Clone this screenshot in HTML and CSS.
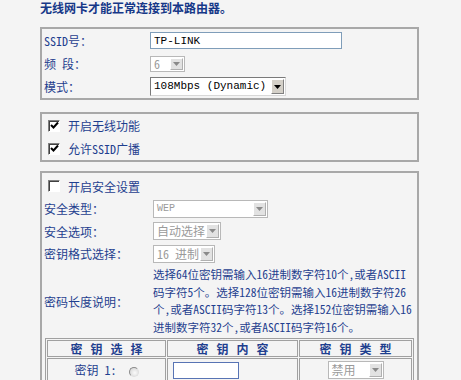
FILE: index.html
```html
<!DOCTYPE html>
<html lang="zh-CN">
<head>
    <meta charset="UTF-8">
    <title>无线网络基本设置</title>
    <link rel="stylesheet" href="styles.css">
</head>
<body>
    <div class="page">
        <div class="title">无线网卡才能正常连接到本路由器。</div>

        <div class="panel">
            <div class="row">
                <span class="label">SSID号：</span>
                <input class="text ssid" type="text" value="TP-LINK">
            </div>
            <div class="row">
                <span class="label">频 段：</span>
                <div class="sel off chan">
                    <span class="val">6</span>
                    <span class="arr"><svg width="7" height="4" viewBox="0 0 7 4"><path d="M0 0h7L3.5 4z"/></svg></span>
                </div>
            </div>
            <div class="row">
                <span class="label">模式：</span>
                <div class="sel mode">
                    <span class="val mono">108Mbps (Dynamic)</span>
                    <span class="arr"><svg width="7" height="4" viewBox="0 0 7 4"><path d="M0 0h7L3.5 4z"/></svg></span>
                </div>
            </div>
        </div>

        <div class="panel checks">
            <div class="row">
                <span class="box"><svg width="9" height="9" viewBox="0 0 9 9"><path d="M1 4l2.5 2.5L8 1.5" /></svg></span>
                <span>开启无线功能</span>
            </div>
            <div class="row">
                <span class="box"><svg width="9" height="9" viewBox="0 0 9 9"><path d="M1 4l2.5 2.5L8 1.5" /></svg></span>
                <span>允许SSID广播</span>
            </div>
        </div>

        <div class="panel sec">
            <div class="row">
                <span class="box"></span>
                <span>开启安全设置</span>
            </div>
            <div class="row">
                <span class="label">安全类型：</span>
                <div class="sel off wep">
                    <span class="val mono small">WEP</span>
                    <span class="arr"><svg width="7" height="4" viewBox="0 0 7 4"><path d="M0 0h7L3.5 4z"/></svg></span>
                </div>
            </div>
            <div class="row">
                <span class="label">安全选项：</span>
                <div class="sel off auto">
                    <span class="val">自动选择</span>
                    <span class="arr"><svg width="7" height="4" viewBox="0 0 7 4"><path d="M0 0h7L3.5 4z"/></svg></span>
                </div>
            </div>
            <div class="row">
                <span class="label">密钥格式选择：</span>
                <div class="sel off hex">
                    <span class="val">16 进制</span>
                    <span class="arr"><svg width="7" height="4" viewBox="0 0 7 4"><path d="M0 0h7L3.5 4z"/></svg></span>
                </div>
            </div>
            <div class="row tall">
                <span class="label">密码长度说明：</span>
                <div class="desc">
                    选择64位密钥需输入16进制数字符10个，或者ASCII<br>
                    码字符5个。选择128位密钥需输入16进制数字符26<br>
                    个，或者ASCII码字符13个。选择152位密钥需输入16<br>
                    进制数字符32个，或者ASCII码字符16个。
                </div>
            </div>

            <table class="keys">
                <colgroup>
                    <col class="c1">
                    <col class="c2">
                    <col class="c3">
                </colgroup>
                <tr>
                    <th>密 钥 选 择</th>
                    <th>密 钥 内 容</th>
                    <th>密 钥 类 型</th>
                </tr>
                <tr>
                    <td class="center">密钥 1: <span class="radio"></span></td>
                    <td><input class="text key" type="text" value=""></td>
                    <td class="center">
                        <div class="sel off kind">
                            <span class="val">禁用</span>
                            <span class="arr"><svg width="7" height="4" viewBox="0 0 7 4"><path d="M0 0h7L3.5 4z"/></svg></span>
                        </div>
                    </td>
                </tr>
            </table>
        </div>
    </div>
</body>
</html>
```

FILE: styles.css
```css
body {
    margin: 0;
    background-color: #f4f4f4;
    font-family: "Noto Sans CJK SC", sans-serif;
    font-size: 12px;
    font-feature-settings: "hwid";
    color: #1f3f8f;
    overflow: hidden;
}

.page {
    width: 379px;
    padding-left: 40px;
}

.title {
    font-weight: bold;
    line-height: 15px;
    color: #163888;
}

.panel {
    border: 2px solid #a8a8a8;
    margin-top: 12px;
    padding-left: 2px;
}

.checks {
    margin-top: 12px;
}

.sec {
    margin-top: 9px;
    padding-top: 2px;
}

.row {
    display: flex;
    align-items: center;
    height: 23px;
}

.sec .row {
    height: 22.5px;
}

.sec .row.tall {
    height: auto;
    padding-top: 1px;
}

.label {
    width: 106px;
    flex-shrink: 0;
}

.sec .label {
    width: 109px;
}

.text {
    box-sizing: border-box;
    height: 17px;
    margin: 0;
    padding: 0 3px;
    border: 1px solid #7f9db9;
    background-color: #fff;
    font-family: "Liberation Mono", monospace;
    font-size: 11px;
    color: #000;
}

.ssid {
    width: 192px;
}

.key {
    width: 66px;
    margin-left: 5px;
    border-color: #5874b4;
}

/* fake select boxes */
.sel {
    display: inline-flex;
    box-sizing: border-box;
    height: 18px;
    border: 1px solid #7a7a7a;
    border-right-color: #d8d8d8;
    border-bottom-color: #d8d8d8;
    background-color: #fff;
    color: #000;
    text-align: left;
}

.sel .val {
    flex: 1;
    padding-left: 3px;
    line-height: 16px;
    white-space: nowrap;
}

.sel .arr {
    width: 13px;
    margin: 1px;
    box-sizing: border-box;
    border: 1px solid;
    border-color: #fff #808080 #808080 #fff;
    background-color: #d4d0c8;
    display: flex;
    align-items: center;
    justify-content: center;
}

.sel .arr path {
    fill: #000;
}

.sel.off {
    border-color: #b8b8b8;
    color: #9a9a9a;
}

.sel.off .arr {
    background-color: #e2e2e2;
    border-color: #fff #b0b0b0 #b0b0b0 #fff;
}

.sel.off .arr path {
    fill: #8a8a8a;
}

.mono {
    font-family: "Liberation Mono", monospace;
    font-size: 11px;
}

.small {
    font-size: 10px;
}

.chan {
    width: 35px;
    height: 16px;
}

.chan .val {
    line-height: 14px;
}

.mode {
    width: 136px;
    height: 19px;
}

.mode .val {
    line-height: 17px;
}

.wep {
    width: 115px;
}

.auto {
    width: 68px;
}

.hex {
    width: 62px;
}

.kind {
    width: 56px;
}

/* checkboxes */
.box {
    box-sizing: border-box;
    width: 12px;
    height: 12px;
    margin: 0 8px 0 4px;
    border: 1px solid;
    border-color: #808080 #fff #fff #808080;
    box-shadow: inset 1px 1px 0 #404040;
    background-color: #fff;
    display: flex;
    align-items: center;
    justify-content: center;
}

.box path {
    fill: none;
    stroke: #000;
    stroke-width: 2;
}

.desc {
    font-size: 11.5px;
    line-height: 17.5px;
    white-space: nowrap;
}

/* key table */
.keys {
    width: 369px;
    margin: 2px 0 0 1px;
    table-layout: fixed;
    border-collapse: separate;
    border-spacing: 1px;
    border: 1px solid #a0a0a0;
}

.c1 {
    width: 119px;
}

.c2 {
    width: 131px;
}

.keys th,
.keys td {
    border: 1px solid #a0a0a0;
    padding: 0;
}

.keys th {
    height: 15px;
    line-height: 15px;
    font-weight: bold;
    word-spacing: 2px;
    color: #1f3f8f;
}

.keys td {
    height: 21px;
}

.center {
    text-align: center;
}

.radio {
    display: inline-block;
    vertical-align: middle;
    box-sizing: border-box;
    width: 10px;
    height: 10px;
    margin-left: 6px;
    border-radius: 50%;
    border: 1px solid;
    border-color: #8a8a8a #e0e0e0 #e0e0e0 #8a8a8a;
    background: radial-gradient(circle at 60% 60%, #fafafa, #d0d0d0);
}
```
